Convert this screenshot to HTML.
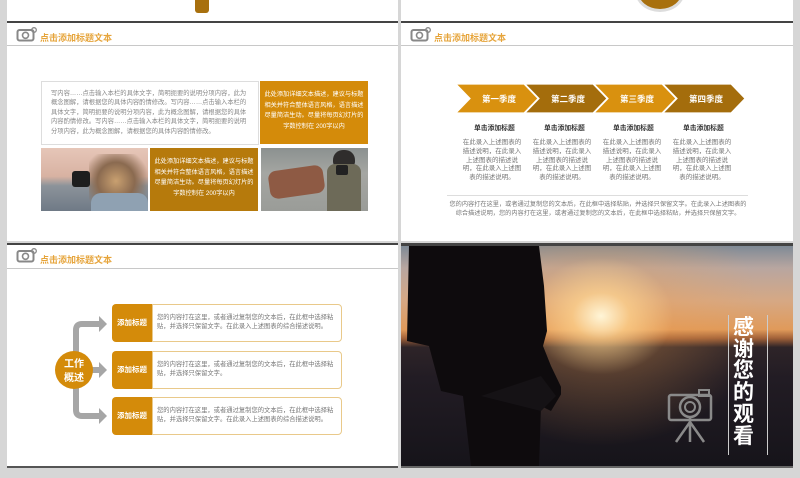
<!DOCTYPE html>
<html><head><meta charset="utf-8"><style>
*{margin:0;padding:0;box-sizing:border-box}
body{width:800px;height:478px;background:#d6d6d6;position:relative;overflow:hidden;font-family:"Liberation Sans","Noto Sans CJK SC",sans-serif}
.a{position:absolute}
.s{background:#fff;position:absolute}
.hd{position:absolute;font-size:9px;color:#e6a43a;font-weight:bold}
.hl{position:absolute;height:1px;background:#c8c8c8}
.t7{font-size:6.5px;color:#777;line-height:8.8px}
</style></head><body>
<div class="s" style="left:7px;top:0;width:391px;height:21px"></div>
<div class="a" style="left:195px;top:0;width:14px;height:13px;background:#a8700e;border-radius:0 0 3px 3px"></div>
<div class="a" style="left:7px;top:21px;width:391px;height:2px;background:#444"></div>
<div class="s" style="left:401px;top:0;width:392px;height:21px"></div>
<div class="a" style="left:635px;top:-30px;width:50px;height:42px;border-radius:50%;background:#a8700e;border:3px solid #ddd"></div>
<div class="a" style="left:401px;top:21px;width:392px;height:2px;background:#444"></div>

<!-- slide TL -->
<div class="s" style="left:7px;top:23px;width:391px;height:218px"></div>
<svg class="a" style="left:16px;top:27px" width="22" height="15" viewBox="0 0 22 15"><rect x="1.5" y="3" width="16" height="10.5" rx="2" fill="none" stroke="#888" stroke-width="2"/><circle cx="9.5" cy="8.3" r="3" fill="none" stroke="#888" stroke-width="1.6"/><circle cx="18" cy="3" r="2.3" fill="none" stroke="#888" stroke-width="1.3"/></svg>
<div class="hd" style="left:40px;top:31px">点击添加标题文本</div>
<div class="hl" style="left:7px;top:45px;width:391px"></div>
<div class="a t7" style="left:41px;top:81px;width:218px;height:64px;border:1px solid #ddd;padding:7px 9px;font-size:6.3px;line-height:9.4px;color:#888">写内容……点击输入本栏的具体文字，简明扼要的说明分项内容，此为概念图解，请根据您的具体内容酌情修改。写内容……点击输入本栏的具体文字，简明扼要的说明分项内容，此为概念图解，请根据您的具体内容酌情修改。写内容……点击输入本栏的具体文字，简明扼要的说明分项内容，此为概念图解，请根据您的具体内容酌情修改。</div>
<div class="a" style="left:260px;top:81px;width:108px;height:63px;background:#d48b0a;color:#fff;font-size:6.2px;line-height:10.5px;text-align:center;padding:9px 3px">此处添加详细文本描述，建议与标题相关并符合整体语言风格，语言描述尽量简洁生动。尽量将每页幻灯片的字数控制在 200字以内</div>
<div class="a" style="left:41px;top:148px;width:107px;height:63px;overflow:hidden;background:linear-gradient(180deg,#e6c6b8 0%,#d8b2a2 45%,#8c939a 60%,#6f7a86 100%)">
<div class="a" style="left:48px;top:6px;width:60px;height:60px;background:radial-gradient(ellipse at 45% 45%,#c9a070 0%,#8a6a50 40%,rgba(120,100,90,0) 72%)"></div>
<div class="a" style="left:50px;top:45px;width:57px;height:20px;background:#8fa1b2;border-radius:10px 10px 0 0"></div>
<div class="a" style="left:31px;top:23px;width:18px;height:16px;background:#1e1e1e;border-radius:3px"></div>
</div>
<div class="a" style="left:150px;top:148px;width:108px;height:63px;background:#b67a0c;color:#fff;font-size:6.2px;line-height:10.5px;text-align:center;padding:9px 3px">此处添加详细文本描述，建议与标题相关并符合整体语言风格，语言描述尽量简洁生动。尽量将每页幻灯片的字数控制在 200字以内</div>
<div class="a" style="left:261px;top:148px;width:107px;height:63px;overflow:hidden;background:linear-gradient(180deg,#8b9190 0%,#a5a6a2 40%,#9a9c98 100%)">
<div class="a" style="left:8px;top:20px;width:55px;height:28px;background:#8e5a44;border-radius:8px;transform:rotate(-8deg)"></div>
<div class="a" style="left:72px;top:2px;width:22px;height:16px;background:#2f2d2c;border-radius:10px 10px 4px 4px"></div>
<div class="a" style="left:66px;top:16px;width:34px;height:47px;background:#6d6a58;border-radius:8px 8px 0 0"></div>
<div class="a" style="left:75px;top:17px;width:12px;height:10px;background:#222;border-radius:2px"></div>
</div>

<!-- slide TR -->
<div class="s" style="left:401px;top:23px;width:392px;height:218px"></div>
<svg class="a" style="left:410px;top:27px" width="22" height="15" viewBox="0 0 22 15"><rect x="1.5" y="3" width="16" height="10.5" rx="2" fill="none" stroke="#888" stroke-width="2"/><circle cx="9.5" cy="8.3" r="3" fill="none" stroke="#888" stroke-width="1.6"/><circle cx="18" cy="3" r="2.3" fill="none" stroke="#888" stroke-width="1.3"/></svg>
<div class="hd" style="left:434px;top:31px">点击添加标题文本</div>
<div class="hl" style="left:401px;top:45px;width:392px"></div>
<svg class="a" style="left:0;top:0" width="800" height="240">
<g stroke="#fff" stroke-width="1.2">
<polygon points="456,84 524,84 538,98.5 524,113 456,113 470,98.5" fill="#d9910f"/>
<polygon points="525,84 593,84 607,98.5 593,113 525,113 539,98.5" fill="#a46d0c"/>
<polygon points="594,84 662,84 676,98.5 662,113 594,113 608,98.5" fill="#d9910f"/>
<polygon points="663,84 731,84 745,98.5 731,113 663,113 677,98.5" fill="#a46d0c"/>
</g>
<g fill="#fff" font-size="8.5" font-weight="bold" text-anchor="middle" font-family="Liberation Sans,Noto Sans CJK SC,sans-serif">
<text x="499" y="102">第一季度</text><text x="568" y="102">第二季度</text><text x="637" y="102">第三季度</text><text x="706" y="102">第四季度</text>
</g>
</svg>
<div class="a" style="left:447px;top:122px;width:300px;font-size:6.8px;font-weight:bold;color:#333">
<span class="a" style="left:27px;width:60px">单击添加标题</span><span class="a" style="left:97px;width:60px">单击添加标题</span><span class="a" style="left:166px;width:60px">单击添加标题</span><span class="a" style="left:236px;width:60px">单击添加标题</span></div>
<div class="a t7" style="left:462px;top:139px;width:60px;text-align:center">在此录入上述图表的描述说明，在此录入上述图表的描述说明，在此录入上述图表的描述说明。</div>
<div class="a t7" style="left:532px;top:139px;width:60px;text-align:center">在此录入上述图表的描述说明，在此录入上述图表的描述说明，在此录入上述图表的描述说明。</div>
<div class="a t7" style="left:602px;top:139px;width:60px;text-align:center">在此录入上述图表的描述说明，在此录入上述图表的描述说明，在此录入上述图表的描述说明。</div>
<div class="a t7" style="left:672px;top:139px;width:60px;text-align:center">在此录入上述图表的描述说明，在此录入上述图表的描述说明，在此录入上述图表的描述说明。</div>
<div class="hl" style="left:447px;top:195px;width:301px;background:#ddd"></div>
<div class="a t7" style="left:448px;top:200px;width:300px;text-align:center;font-size:6.2px;line-height:9px">您的内容打在这里，或者通过复制您的文本后，在此框中选择粘贴，并选择只保留文字。在此录入上述图表的综合描述说明，您的内容打在这里，或者通过复制您的文本后，在此框中选择粘贴，并选择只保留文字。</div>

<!-- slide BL -->
<div class="a" style="left:7px;top:243px;width:391px;height:2px;background:#444"></div>
<div class="s" style="left:7px;top:245px;width:391px;height:221px"></div>
<div class="a" style="left:7px;top:466px;width:391px;height:2px;background:#555"></div>
<svg class="a" style="left:16px;top:248px" width="22" height="15" viewBox="0 0 22 15"><rect x="1.5" y="3" width="16" height="10.5" rx="2" fill="none" stroke="#888" stroke-width="2"/><circle cx="9.5" cy="8.3" r="3" fill="none" stroke="#888" stroke-width="1.6"/><circle cx="18" cy="3" r="2.3" fill="none" stroke="#888" stroke-width="1.3"/></svg>
<div class="hd" style="left:40px;top:253px">点击添加标题文本</div>
<div class="hl" style="left:7px;top:268px;width:391px"></div>
<svg class="a" style="left:0;top:240px" width="400" height="238">
<path d="M76 115 V90 Q76 84 82 84 H100" fill="none" stroke="#a6a6a6" stroke-width="6"/>
<path d="M76 145 V170 Q76 176 82 176 H100" fill="none" stroke="#a6a6a6" stroke-width="6"/>
<path d="M90 130 H100" fill="none" stroke="#a6a6a6" stroke-width="6"/>
<polygon points="99,76 107,84 99,92" fill="#a6a6a6"/>
<polygon points="99,122 107,130 99,138" fill="#a6a6a6"/>
<polygon points="99,168 107,176 99,184" fill="#a6a6a6"/>
<circle cx="74" cy="130" r="19" fill="#d48b0a"/>
<text x="74" y="127" fill="#fff" font-size="10" font-weight="bold" text-anchor="middle" font-family="Liberation Sans,Noto Sans CJK SC,sans-serif">工作</text>
<text x="74" y="141" fill="#fff" font-size="10" font-weight="bold" text-anchor="middle" font-family="Liberation Sans,Noto Sans CJK SC,sans-serif">概述</text>
</svg>
<div class="a" style="left:112px;top:304px;width:40px;height:38px;background:#d48b0a;border-radius:4px 0 0 4px;color:#fff;font-size:7.5px;font-weight:bold;line-height:38px;text-align:center">添加标题</div>
<div class="a t7" style="left:152px;top:304px;width:190px;height:38px;border:1px solid #e9c98a;border-radius:0 4px 4px 0;padding:8px 4px;font-size:6.3px;line-height:9px">您的内容打在这里，或者通过复制您的文本后，在此框中选择粘贴，并选择只保留文字。在此录入上述图表的综合描述说明。</div>
<div class="a" style="left:112px;top:351px;width:40px;height:38px;background:#d48b0a;border-radius:4px 0 0 4px;color:#fff;font-size:7.5px;font-weight:bold;line-height:38px;text-align:center">添加标题</div>
<div class="a t7" style="left:152px;top:351px;width:190px;height:38px;border:1px solid #e9c98a;border-radius:0 4px 4px 0;padding:8px 4px;font-size:6.3px;line-height:9px">您的内容打在这里，或者通过复制您的文本后，在此框中选择粘贴，并选择只保留文字。</div>
<div class="a" style="left:112px;top:397px;width:40px;height:38px;background:#d48b0a;border-radius:4px 0 0 4px;color:#fff;font-size:7.5px;font-weight:bold;line-height:38px;text-align:center">添加标题</div>
<div class="a t7" style="left:152px;top:397px;width:190px;height:38px;border:1px solid #e9c98a;border-radius:0 4px 4px 0;padding:8px 4px;font-size:6.3px;line-height:9px">您的内容打在这里，或者通过复制您的文本后，在此框中选择粘贴，并选择只保留文字。在此录入上述图表的综合描述说明。</div>

<!-- slide BR -->
<div class="a" style="left:401px;top:243px;width:392px;height:3px;background:#444"></div>
<div class="a" style="left:401px;top:246px;width:392px;height:220px;overflow:hidden;background:linear-gradient(180deg,#7f8a96 0%,#b8a6a0 10%,#d6a884 25%,#e09a5a 38%,#a06038 42%,#2e2428 46%,#221c24 60%,#16141a 100%)">
<div class="a" style="left:40px;top:-60px;width:320px;height:260px;background:radial-gradient(closest-side,rgba(255,245,215,1) 0%,rgba(255,210,140,.75) 18%,rgba(240,160,80,.25) 45%,rgba(240,160,80,0) 100%)"></div>
<svg class="a" style="left:0;top:0" width="160" height="220" viewBox="0 0 160 220"><path d="M8 0 H138 L143 40 L146 85 L142 100 L150 120 L162 145 L150 165 L140 160 L138 220 H70 L62 150 L40 145 L28 100 L6 95 Z" fill="#0e0b0d"/><path d="M80 150 L140 130 L155 150 L140 165 Z" fill="#151215"/></svg>
<div class="a" style="left:327px;top:69px;width:1px;height:140px;background:#ccc"></div>
<div class="a" style="left:366px;top:69px;width:1px;height:140px;background:#ccc"></div>
<div class="a" style="left:332px;top:71px;width:24px;font-size:21px;line-height:21.7px;font-weight:bold;color:#fff">感谢您的观看</div>
<svg class="a" style="left:266px;top:140px" width="50" height="60" viewBox="0 0 50 60"><rect x="2" y="9" width="42" height="25" rx="2" fill="none" stroke="#8a8a8a" stroke-width="2.5"/><rect x="32" y="4" width="10" height="6" fill="none" stroke="#8a8a8a" stroke-width="2"/><circle cx="23" cy="21" r="10" fill="none" stroke="#8a8a8a" stroke-width="2.5"/><circle cx="23" cy="21" r="5" fill="none" stroke="#8a8a8a" stroke-width="2"/><path d="M23 31 V56 M23 36 L9 56 M23 36 L37 56" stroke="#8a8a8a" stroke-width="2.5" fill="none"/></svg>
</div>
<div class="a" style="left:401px;top:466px;width:392px;height:2px;background:#666"></div>
</body></html>
